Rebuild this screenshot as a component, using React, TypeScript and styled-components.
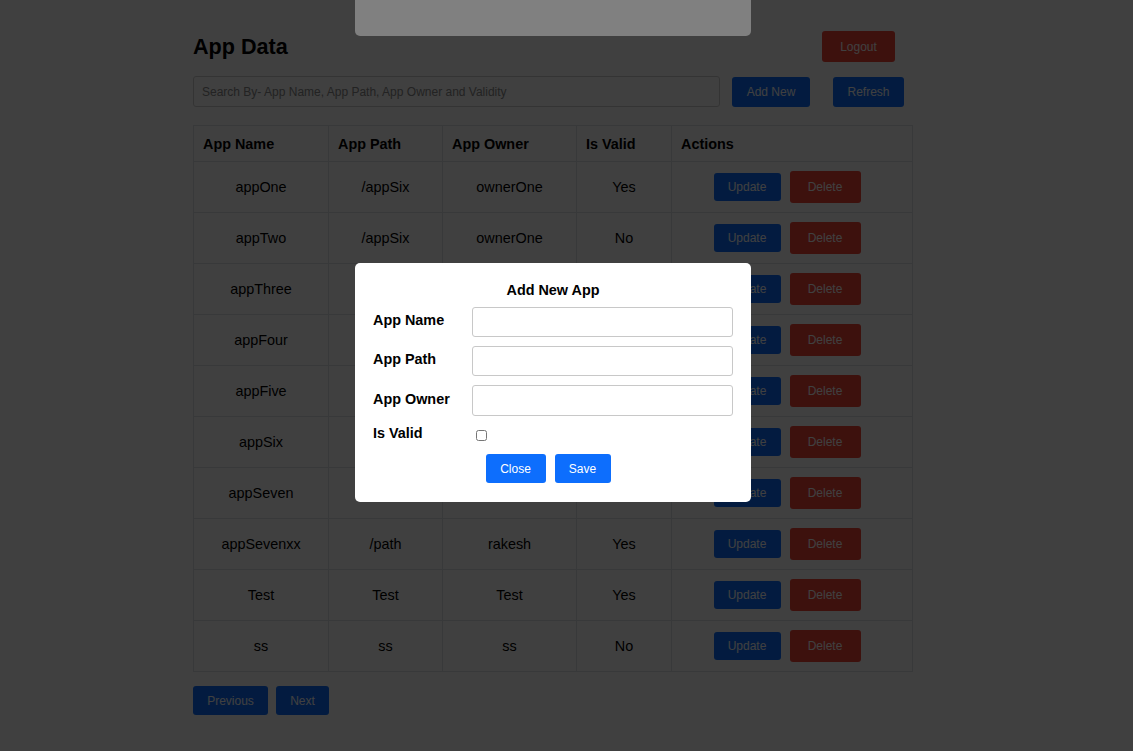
import React from "react";
import styled, { createGlobalStyle } from "styled-components";

const Global = createGlobalStyle`
  html, body { margin: 0; padding: 0; background: #ffffff; }
  body { font-family: "Liberation Sans", Arial, sans-serif; color: #000; }
  * { box-sizing: border-box; }
`;

const BLUE = "#0d6efd";
const RED = "#f44336";

const Page = styled.div`
  width: 1133px;
  min-height: 751px;
  padding: 31px 0 0 193px;
`;

const Container = styled.div`
  width: 720px;
`;

const TitleRow = styled.div`
  display: flex;
  justify-content: space-between;
  align-items: flex-start;
  height: 45px;
`;

const Title = styled.h2`
  margin: 3px 0 0 0;
  font-size: 21.6px;
  font-weight: 700;
  line-height: 26px;
`;

const Button = styled.button<{ $variant?: "blue" | "red"; $w: number; $h: number }>`
  width: ${(p) => p.$w}px;
  height: ${(p) => p.$h}px;
  border: none;
  border-radius: 3px;
  background: ${(p) => (p.$variant === "red" ? RED : BLUE)};
  color: #ffffff;
  font-family: "Liberation Sans", Arial, sans-serif;
  font-size: 12px;
  padding: 0;
  cursor: pointer;
`;

const LogoutWrap = styled.div`
  margin-right: 18px;
`;

const SearchRow = styled.div`
  display: flex;
  align-items: center;
  height: 31px;
  margin-bottom: 18px;
`;

const SearchInput = styled.input`
  width: 527px;
  height: 31px;
  border: 1px solid #d0d0d0;
  border-radius: 3px;
  padding: 0 8px;
  font-family: "Liberation Sans", Arial, sans-serif;
  font-size: 12px;
  &::placeholder { color: #8a8a8a; }
`;

const SearchButtons = styled.div`
  display: flex;
  gap: 23px;
  margin-left: 12px;
`;

const Table = styled.table`
  width: 719px;
  border-collapse: collapse;
  border: 1px solid #dee2e6;
  table-layout: fixed;
`;

const Th = styled.th<{ $w: number }>`
  width: ${(p) => p.$w}px;
  height: 36px;
  border: 1px solid #dee2e6;
  text-align: left;
  padding: 0 9px;
  font-size: 14.4px;
  font-weight: 700;
`;

const Td = styled.td`
  height: 51px;
  border: 1px solid #dee2e6;
  text-align: center;
  vertical-align: middle;
  padding: 0;
  font-size: 14.4px;
`;

const Actions = styled.div`
  display: flex;
  justify-content: center;
  align-items: center;
  gap: 9px;
  padding-right: 10px;
`;

const Pager = styled.div`
  display: flex;
  gap: 8px;
  margin-top: 14px;
`;

const Overlay = styled.div`
  position: fixed;
  inset: 0;
  background: rgba(0, 0, 0, 0.75);
`;

const Toast = styled.div`
  position: fixed;
  left: 355px;
  top: 0;
  width: 396px;
  height: 36px;
  background: #808080;
  border-radius: 0 0 5px 5px;
`;

const Modal = styled.div`
  position: fixed;
  left: 355px;
  top: 263px;
  width: 396px;
  height: 239px;
  background: #ffffff;
  border-radius: 5px;
  padding: 18px 18px 0 18px;
`;

const ModalTitle = styled.div`
  text-align: center;
  font-weight: 700;
  font-size: 14.4px;
  line-height: 18px;
  margin-bottom: 8px;
`;

const FormRow = styled.div<{ $h: number }>`
  display: flex;
  align-items: center;
  height: ${(p) => p.$h}px;
  margin-bottom: 9px;
`;

const Label = styled.label`
  width: 99px;
  font-weight: 700;
  font-size: 14.4px;
  padding-bottom: 4px;
`;

const TextInput = styled.input`
  width: 261px;
  height: 100%;
  border: 1px solid #c8c8c8;
  border-radius: 3px;
  padding: 0 6px;
`;

const Check = styled.input`
  width: 11px;
  height: 11px;
  margin: 0 0 0 4px;
`;

const ModalButtons = styled.div`
  display: flex;
  justify-content: center;
  gap: 9px;
  margin-top: 1px;
  padding-right: 10px;
`;

const rows = [
  ["appOne", "/appSix", "ownerOne", "Yes"],
  ["appTwo", "/appSix", "ownerOne", "No"],
  ["appThree", "/appSix", "ownerOne", "Yes"],
  ["appFour", "/appSix", "ownerOne", "Yes"],
  ["appFive", "/appSix", "ownerOne", "Yes"],
  ["appSix", "/appSix", "ownerOne", "Yes"],
  ["appSeven", "/appSix", "ownerOne", "Yes"],
  ["appSevenxx", "/path", "rakesh", "Yes"],
  ["Test", "Test", "Test", "Yes"],
  ["ss", "ss", "ss", "No"],
];

export default function App() {
  return (
    <>
      <Global />
      <Page>
        <Container>
          <TitleRow>
            <Title>App Data</Title>
            <LogoutWrap>
              <Button $variant="red" $w={73} $h={31}>Logout</Button>
            </LogoutWrap>
          </TitleRow>
          <SearchRow>
            <SearchInput placeholder="Search By- App Name, App Path, App Owner and Validity" />
            <SearchButtons>
              <Button $w={78} $h={30}>Add New</Button>
              <Button $w={71} $h={30}>Refresh</Button>
            </SearchButtons>
          </SearchRow>
          <Table>
            <thead>
              <tr>
                <Th $w={135}>App Name</Th>
                <Th $w={114}>App Path</Th>
                <Th $w={134}>App Owner</Th>
                <Th $w={95}>Is Valid</Th>
                <Th $w={241}>Actions</Th>
              </tr>
            </thead>
            <tbody>
              {rows.map((r, i) => (
                <tr key={i}>
                  <Td>{r[0]}</Td>
                  <Td>{r[1]}</Td>
                  <Td>{r[2]}</Td>
                  <Td>{r[3]}</Td>
                  <Td>
                    <Actions>
                      <Button $w={67} $h={28}>Update</Button>
                      <Button $variant="red" $w={71} $h={32}>Delete</Button>
                    </Actions>
                  </Td>
                </tr>
              ))}
            </tbody>
          </Table>
          <Pager>
            <Button $w={75} $h={29}>Previous</Button>
            <Button $w={53} $h={29}>Next</Button>
          </Pager>
        </Container>
      </Page>
      <Overlay />
      <Toast />
      <Modal>
        <ModalTitle>Add New App</ModalTitle>
        <FormRow $h={30}>
          <Label>App Name</Label>
          <TextInput />
        </FormRow>
        <FormRow $h={30}>
          <Label>App Path</Label>
          <TextInput />
        </FormRow>
        <FormRow $h={31}>
          <Label>App Owner</Label>
          <TextInput />
        </FormRow>
        <FormRow $h={20}>
          <Label>Is Valid</Label>
          <Check type="checkbox" />
        </FormRow>
        <ModalButtons>
          <Button $w={60} $h={29}>Close</Button>
          <Button $w={56} $h={29}>Save</Button>
        </ModalButtons>
      </Modal>
    </>
  );
}
